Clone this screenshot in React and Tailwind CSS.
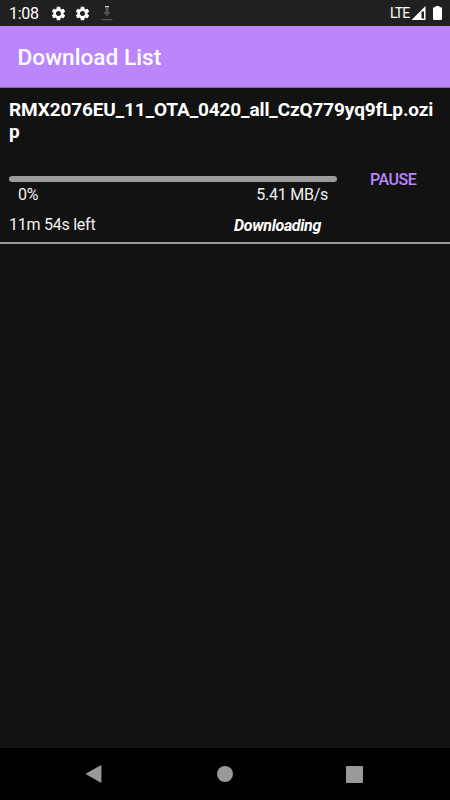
import { MdSettings } from "react-icons/md";

function StatusBar() {
  return (
    <div className="flex h-[26px] shrink-0 items-center bg-[#202020] text-white">
      <span className="ml-[9px] mt-[2px] w-[41px] text-[16px] leading-[20px] tracking-[-0.25px]">1:08</span>
      <MdSettings className="size-[17px]" />
      <MdSettings className="ml-[7px] size-[17px]" />
      <svg className="ml-[10px] h-[16px] w-[12px]" viewBox="0 0 12 16">
        <path d="M4 1h4v1.400H4z" fill="#ccc" />
        <path d="M4.500 3h3v4h2.200L6 11.300 2.300 7h2.200zM.5 14h11v1.300H.5z" fill="#555" />
      </svg>
      <span className="ml-auto mr-[1.5px] text-[14px] leading-[20px] tracking-[-0.8px]">LTE</span>
      <svg className="h-[16px] w-[15px]" viewBox="0 0 15 16">
        <path d="M14.500 1v14H.5z" fill="#fff" />
        <path d="M10.500 6.500h2.500V13.500h-2.500z" fill="#202020" />
      </svg>
      <svg className="ml-[7px] mr-[8px] h-[16px] w-[9px]" viewBox="0 0 9 16">
        <path d="M2.500 1h4v1.300H8q1 0 1 1V14q0 1-1 1H1q-1 0-1-1V3.300q0-1 1-1h1.500z" fill="#fff" />
      </svg>
    </div>
  );
}

function DownloadItem() {
  return (
    <div className="h-[156px] border-b-2 border-[#999] pl-[9px] pt-[11px] text-[16px] leading-[20px] tracking-[-0.25px] text-[#f1f1f1]">
      <div className="h-[76px] w-[430px] break-all text-[19px] font-bold leading-[22px] tracking-[-0.12px] text-white">
        RMX2076EU_11_OTA_0420_all_CzQ779yq9fLp.ozip
      </div>
      <div className="flex">
        <div className="w-[328px]">
          <div className="mt-[1px] h-[6px] rounded-full bg-[#9c9c9c]" />
          <div className="mt-[3px] flex justify-between px-[9px]">
            <span>0%</span>
            <span>5.41 MB/s</span>
          </div>
        </div>
        <button className="-mt-[5px] ml-[33px] h-[20px] text-[16px] font-medium leading-[20px] tracking-[-0.5px] text-[#bb86fc]">PAUSE</button>
      </div>
      <div className="mt-[10px] flex">
        <span className="w-[225px]">11m 54s left</span>
        <span className="mt-px font-bold italic tracking-[-0.32px] text-white">Downloading</span>
      </div>
    </div>
  );
}

function NavigationBar() {
  return (
    <div className="flex h-[52px] items-center justify-between bg-black px-[85px] text-[#999]">
      <svg className="size-[18px]" viewBox="0 0 18 18" fill="currentColor">
        <path d="M15.400.4q1-.6 1 .5v16q0 1.100-1 .5L1.500 9.500q-1-.6 0-1.200z" />
      </svg>
      <div className="size-4 rounded-full bg-[#999]" />
      <div className="mr-[2px] size-[17px] rounded-[1px] bg-[#999]" />
    </div>
  );
}

export default function App() {
  return (
    <div className="flex h-[800px] w-[450px] flex-col overflow-hidden bg-[#121212] font-['Roboto',sans-serif]">
      <StatusBar />
      <header className="flex h-[62px] shrink-0 items-center border-b border-[#8963b8] bg-[#bb86fc] pl-[17.5px] pt-[3px] text-[22.7px] font-medium text-white">
        Download List
      </header>
      <main className="flex-1">
        <DownloadItem />
      </main>
      <NavigationBar />
    </div>
  );
}
